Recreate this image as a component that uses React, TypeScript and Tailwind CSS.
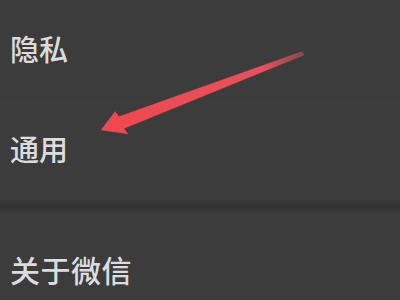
export default function App() {
  return (
    <div className="relative h-[300px] w-[400px] overflow-hidden bg-[#3c3c3c] font-['Noto_Sans_CJK_SC',sans-serif] text-[#dcdcdc]">
      <div className="flex h-[97px] items-center pl-[10px] pt-[1px] text-[29px] font-medium">隐私</div>
      <div className="h-px bg-[#393939]" />
      <div className="flex h-[102px] items-center pl-[10px] text-[29px] font-medium">通用</div>
      <div className="h-[13px] bg-gradient-to-b from-[#393939] via-[#323232] to-[#3a3a3a]" />
      <div className="flex h-[110px] items-center pl-[10px] pt-[2px] text-[30px] font-medium tracking-[0.5px]">关于微信</div>

      <svg className="pointer-events-none absolute left-0 top-0" width="400" height="300" viewBox="0 0 400 300">
        <defs>
          <linearGradient id="arrowFade" x1="303" y1="53" x2="101" y2="130" gradientUnits="userSpaceOnUse">
            <stop offset="0" stopColor="#c75a63" stopOpacity="0.5" />
            <stop offset="0.2" stopColor="#e6525b" />
            <stop offset="1" stopColor="#f0474f" />
          </linearGradient>
        </defs>
        <polygon
          points="302,51.5 304,55 124,128.5 128,134 101,130 115,111.5 119,116.5"
          fill="url(#arrowFade)"
          stroke="#f0474f"
          strokeOpacity="0.35"
          strokeWidth="0.8"
          strokeLinejoin="round"
        />
      </svg>
    </div>
  );
}
